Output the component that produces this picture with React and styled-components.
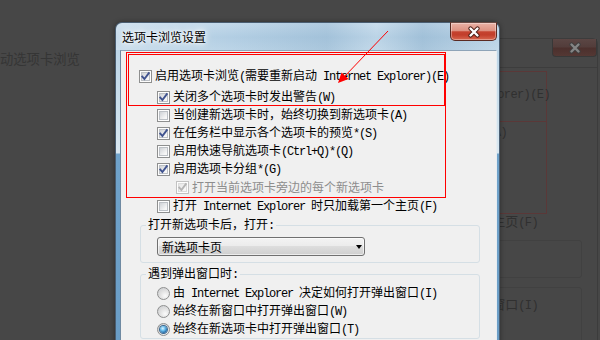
import React from "react";
import styled, { createGlobalStyle } from "styled-components";

const GlobalStyle = createGlobalStyle`
  html, body { margin: 0; padding: 0; background: #474747; overflow: hidden; }
  #root { width: 600px; height: 340px; }
`;

const Desktop = styled.div`
  position: relative;
  width: 600px;
  height: 340px;
  overflow: hidden;
  background: #474747;
  font-family: "Noto Sans CJK SC", "Noto Sans", sans-serif;
  font-size: 12px;
  color: #000;
`;

const Mono = styled.span`
  font-family: "Liberation Mono", "DejaVu Sans Mono", monospace;
  font-size: 12px;
  letter-spacing: -1.2px;
`;

/* ---------- dimmed window behind ---------- */
const GhostCaption = styled.div`
  position: absolute;
  left: 0;
  top: 51px;
  font-size: 13.3px;
  line-height: 16px;
  color: #353535;
  white-space: nowrap;
`;

const GhostWindow = styled.div`
  position: absolute;
  left: 300px;
  top: 38px;
  width: 298px;
  height: 330px;
  box-sizing: border-box;
  border: 1px solid #3c3c3c;
  border-radius: 6px 6px 0 0;
`;

const GhostClose = styled.div`
  position: absolute;
  left: 251px;
  top: 0;
  width: 45px;
  height: 18px;
  box-sizing: border-box;
  border: 1px solid #383838;
  border-top: none;
  border-radius: 0 0 4px 4px;
  background: linear-gradient(#5b4644 0%, #533d3b 45%, #4c302d 55%, #543834 100%);
  display: flex;
  align-items: center;
  justify-content: center;
`;

const GhostPanel = styled.div`
  position: absolute;
  left: 0;
  right: 0;
  top: 28px;
  bottom: 0;
  border-top: 1px solid #3d3d3d;
`;

const GhostRedBox = styled.div`
  position: absolute;
  left: 100px;
  top: 32px;
  width: 146px;
  height: 143px;
  box-sizing: border-box;
  border: 1px solid #5a3838;
  &::after {
    content: "";
    position: absolute;
    left: 0;
    right: 0;
    top: 49px;
    border-top: 1px solid #5a3838;
  }
`;

const GhostText = styled.div`
  position: absolute;
  right: ${(p) => p.$right}px;
  top: ${(p) => p.$top}px;
  font-size: 13px;
  line-height: 16px;
  color: #303030;
  white-space: nowrap;
  ${Mono} {
    font-size: 12px;
    letter-spacing: -0.6px;
  }
`;

const GhostGroup = styled.div`
  position: absolute;
  left: 100px;
  right: 15px;
  top: ${(p) => p.$top}px;
  height: ${(p) => p.$h}px;
  border: 1px solid #414141;
  border-radius: 3px;
`;

/* ---------- foreground dialog ---------- */
const Dialog = styled.div`
  position: absolute;
  left: 115px;
  top: 22px;
  width: 385px;
  height: 330px;
  box-sizing: border-box;
  border: 1px solid #4a5e72;
  border-bottom: none;
  border-radius: 7px 7px 0 0;
  display: flex;
  flex-direction: column;
  background: linear-gradient(
    180deg,
    #c3d9ea 0px,
    #b2cee3 14px,
    #bcd5e7 28px,
    #cde0ec 90px,
    #d9e7f0 130px,
    #6fa2ca 131px,
    #6a9dc6 100%
  );
  box-shadow: 0 0 5px rgba(0, 0, 0, 0.4);
`;

const TitleBar = styled.div`
  flex: none;
  height: 27px;
  display: flex;
  align-items: flex-start;
  justify-content: space-between;
  background: linear-gradient(
    90deg,
    rgba(255, 255, 255, 0.25) 0%,
    rgba(255, 255, 255, 0) 30%,
    rgba(70, 120, 160, 0.14) 55%,
    rgba(255, 255, 255, 0.12) 68%,
    rgba(70, 120, 160, 0.16) 80%,
    rgba(255, 255, 255, 0.1) 100%
  );
  border-radius: 6px 6px 0 0;
`;

const Title = styled.div`
  padding-left: 6px;
  line-height: 27px;
  font-size: 12px;
  color: #000;
  text-shadow: 0 0 6px #fff, 0 0 3px #fff, 0 0 10px #fff;
`;

const CloseButton = styled.div`
  flex: none;
  width: 47px;
  height: 19px;
  margin: -1px 2px 0 0;
  box-sizing: border-box;
  border: 1px solid #5a2a22;
  border-top-color: #6a4a44;
  border-radius: 0 0 5px 5px;
  background: linear-gradient(
    180deg,
    #eab2a6 0%,
    #dd9181 45%,
    #c5432f 52%,
    #c23e2b 70%,
    #d8674f 100%
  );
  box-shadow: inset 0 0 0 1px rgba(255, 255, 255, 0.35);
  display: flex;
  align-items: center;
  justify-content: center;
`;

const Panel = styled.div`
  flex: 1;
  margin: 0 2px 0 4px;
  box-sizing: border-box;
  border-top: 1px solid #8ea4b8;
  border-left: 1px solid #6f8aa2;
  border-right: 1px solid #e6edf2;
  background: #f0f0f0;
  padding: 16px 0 0 18px;
  display: flex;
  flex-direction: column;
`;

const indents = [0, 18, 37];

const Row = styled.div`
  display: flex;
  align-items: center;
  gap: 3px;
  height: 18px;
  line-height: 18px;
  white-space: nowrap;
  margin-left: ${(p) => indents[p.$indent || 0]}px;
  margin-top: ${(p) => p.$mt || 0}px;
  margin-bottom: ${(p) => p.$mb || 0}px;
  color: ${(p) => (p.$disabled ? "#8d8d8d" : "#000")};
`;

const Box = styled.span`
  position: relative;
  flex: none;
  width: 13px;
  height: 13px;
  box-sizing: border-box;
  border: 1px solid ${(p) => (p.$disabled ? "#c2c2c2" : "#8e8f8f")};
  background: #fdfdfd;
  &::before {
    content: "";
    position: absolute;
    inset: 1px;
    border: 1px solid ${(p) => (p.$disabled ? "#dcdcdc" : "#bcc0c5")};
    background: linear-gradient(135deg, ${(p) => (p.$disabled ? "#e6e6e6" : "#cfd2d6")} 0%, #f7f7f7 80%);
  }
`;

const CheckMark = styled.svg`
  position: absolute;
  left: 0;
  top: 0;
  width: 11px;
  height: 11px;
`;

function Checkbox({ checked, disabled }) {
  return (
    <Box $disabled={disabled}>
      {checked && (
        <CheckMark viewBox="0 0 11 11">
          <path
            d="M2.3 5.6 L4.4 8 L8.8 2.2"
            fill="none"
            stroke={disabled ? "#b4b4b4" : "#40538f"}
            strokeWidth="1.9"
            strokeLinecap="square"
          />
        </CheckMark>
      )}
    </Box>
  );
}

const RadioOuter = styled.span`
  flex: none;
  width: 13px;
  height: 13px;
  box-sizing: border-box;
  border-radius: 50%;
  border: 1px solid #8e8f8f;
  background: radial-gradient(circle at 65% 70%, #fbfbfb 0%, #e2e2e2 45%, #c6c8cb 100%);
  display: flex;
  align-items: center;
  justify-content: center;
`;

const RadioDot = styled.span`
  width: 7px;
  height: 7px;
  border-radius: 50%;
  background: radial-gradient(circle at 40% 35%, #dff4ff 0%, #6cc0ee 35%, #1d62a0 75%, #123d68 100%);
  box-shadow: 0 0 0 1px #3a6890;
`;

function Radio({ checked }) {
  return <RadioOuter>{checked && <RadioDot />}</RadioOuter>;
}

const Group = styled.fieldset`
  width: 340px;
  min-width: 0;
  box-sizing: border-box;
  margin: ${(p) => p.$mt}px 0 0 1px;
  border: 1px solid #d5dfe5;
  border-radius: 3px;
  padding: ${(p) => p.$pad};
`;

const Legend = styled.legend`
  padding: 0 2px;
  line-height: 14px;
  font-size: 12px;
  white-space: nowrap;
`;

const GroupRow = styled(Row)`
  margin-left: 11px;
`;

const Select = styled.div`
  width: 208px;
  height: 19px;
  margin-left: 11px;
  box-sizing: border-box;
  border: 1px solid #707070;
  border-radius: 3px;
  background: linear-gradient(#f3f3f3 0%, #ebebeb 50%, #dddddd 50%, #cfcfcf 100%);
  box-shadow: inset 0 0 0 1px rgba(255, 255, 255, 0.6);
  display: flex;
  align-items: center;
  justify-content: space-between;
  padding: 0 2px 0 4px;
  line-height: 17px;
`;

const Caret = styled.span`
  width: 0;
  height: 0;
  border-left: 3.5px solid transparent;
  border-right: 3.5px solid transparent;
  border-top: 4px solid #000;
  margin-top: 1px;
`;

/* ---------- annotations ---------- */
const RedBox = styled.div`
  position: absolute;
  left: ${(p) => p.$x}px;
  top: ${(p) => p.$y}px;
  width: ${(p) => p.$w}px;
  height: ${(p) => p.$h}px;
  box-sizing: border-box;
  border: ${(p) => p.$t}px solid #ff0000;
  pointer-events: none;
`;

const Overlay = styled.svg`
  position: absolute;
  left: 0;
  top: 0;
  width: 600px;
  height: 340px;
  pointer-events: none;
`;

function CloseX({ color, outline }) {
  return (
    <svg width="14" height="12" viewBox="0 0 14 12">
      <path d="M3.5 2.5 L10.5 9.5 M10.5 2.5 L3.5 9.5" stroke={outline} strokeWidth="4.2" strokeLinecap="round" />
      <path d="M3.5 2.5 L10.5 9.5 M10.5 2.5 L3.5 9.5" stroke={color} strokeWidth="2.4" strokeLinecap="round" />
    </svg>
  );
}

export default function App() {
  return (
    <>
      <GlobalStyle />
      <Desktop>
        <GhostCaption>动选项卡浏览</GhostCaption>
        <GhostWindow>
          <GhostClose>
            <CloseX color="#858585" outline="#3e3e3e" />
          </GhostClose>
          <GhostPanel />
          <GhostRedBox />
          <GhostText $right={47} $top={46}>
            <Mono>xplorer)(E)</Mono>
          </GhostText>
          <GhostText $right={90} $top={84}>
            <Mono>(A)</Mono>
          </GhostText>
          <GhostText $right={59} $top={174}>
            主页<Mono>(F)</Mono>
          </GhostText>
          <GhostGroup $top={201} $h={36} />
          <GhostGroup $top={248} $h={100} />
          <GhostText $right={59} $top={257}>
            窗口<Mono>(I)</Mono>
          </GhostText>
        </GhostWindow>

        <Dialog>
          <TitleBar>
            <Title>选项卡浏览设置</Title>
            <CloseButton>
              <CloseX color="#ffffff" outline="#4a1c14" />
            </CloseButton>
          </TitleBar>
          <Panel>
            <Row $mb={3}>
              <Checkbox checked />
              <span>
                启用选项卡浏览<Mono>(</Mono>需要重新启动<Mono> Internet Explorer)(E)</Mono>
              </span>
            </Row>
            <Row $indent={1}>
              <Checkbox checked />
              <span>
                关闭多个选项卡时发出警告<Mono>(W)</Mono>
              </span>
            </Row>
            <Row $indent={1}>
              <Checkbox />
              <span>
                当创建新选项卡时，始终切换到新选项卡<Mono>(A)</Mono>
              </span>
            </Row>
            <Row $indent={1}>
              <Checkbox checked />
              <span>
                在任务栏中显示各个选项卡的预览<Mono>*(S)</Mono>
              </span>
            </Row>
            <Row $indent={1}>
              <Checkbox />
              <span>
                启用快速导航选项卡<Mono>(Ctrl+Q)*(Q)</Mono>
              </span>
            </Row>
            <Row $indent={1}>
              <Checkbox checked />
              <span>
                启用选项卡分组<Mono>*(G)</Mono>
              </span>
            </Row>
            <Row $indent={2} $disabled>
              <Checkbox checked disabled />
              <span>打开当前选项卡旁边的每个新选项卡</span>
            </Row>
            <Row $indent={1} $mt={1}>
              <Checkbox />
              <span>
                打开<Mono> Internet Explorer </Mono>时只加载第一个主页<Mono>(F)</Mono>
              </span>
            </Row>

            <Group $mt={2} $pad="4px 0 6px 5px">
              <Legend>
                打开新选项卡后，打开<Mono>:</Mono>
              </Legend>
              <Select>
                <span>新选项卡页</span>
                <Caret />
              </Select>
            </Group>

            <Group $mt={3} $pad="2px 0 0 5px">
              <Legend>
                遇到弹出窗口时<Mono>:</Mono>
              </Legend>
              <GroupRow>
                <Radio />
                <span>
                  由<Mono> Internet Explorer </Mono>决定如何打开弹出窗口<Mono>(I)</Mono>
                </span>
              </GroupRow>
              <GroupRow>
                <Radio />
                <span>
                  始终在新窗口中打开弹出窗口<Mono>(W)</Mono>
                </span>
              </GroupRow>
              <GroupRow>
                <Radio checked />
                <span>
                  始终在新选项卡中打开弹出窗口<Mono>(T)</Mono>
                </span>
              </GroupRow>
            </Group>

            <Group $mt={1} $pad="2px 0 0 5px">
              <Legend>从位于以下位置的其他程序打开链接</Legend>
            </Group>
          </Panel>
        </Dialog>

        <RedBox $x={126} $y={52} $w={320} $h={146} $t={1} />
        <RedBox $x={128} $y={54} $w={317} $h={52} $t={1} />
        <Overlay viewBox="0 0 600 340">
          <line x1="388" y1="31" x2="344" y2="77" stroke="#ff0000" strokeWidth="1" />
          <polygon points="338,83 341.5,72.5 348.5,79" fill="#ff0000" />
        </Overlay>
      </Desktop>
    </>
  );
}
